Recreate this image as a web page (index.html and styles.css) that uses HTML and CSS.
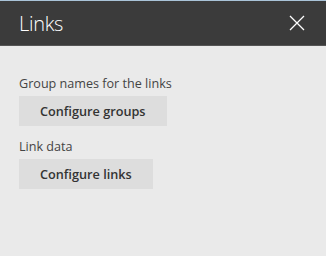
FILE: index.html
```html
<!DOCTYPE html>
<html lang="en">
<head>
    <meta charset="UTF-8">
    <title>Links</title>
    <link rel="stylesheet" href="styles.css">
</head>
<body>
    <div class="panel">
        <div class="panel-header">
            <h1>Links</h1>
            <button class="close-btn" aria-label="Close">
                <svg width="16" height="16" viewBox="0 0 16 16">
                    <path d="M1 1 L15 15 M15 1 L1 15" stroke="#ffffff" stroke-width="1.3" fill="none"/>
                </svg>
            </button>
        </div>

        <div class="panel-body">
            <div class="field">
                <div class="label">Group names for the links</div>
                <button class="action-btn">Configure groups</button>
            </div>
            <div class="field">
                <div class="label">Link data</div>
                <button class="action-btn">Configure links</button>
            </div>
        </div>
    </div>
</body>
</html>
```

FILE: styles.css
```css
:root {
    --header-bg: #3b3b3b;
    --body-bg: #eaeaea;
    --button-bg: #dddddd;
    --text-color: #333333;
    --label-color: #444444;
    --accent-line: #a9c3d8;
}

* {
    box-sizing: border-box;
    margin: 0;
    padding: 0;
}

html, body {
    height: 100%;
}

body {
    font-family: "Open Sans", "Noto Sans", sans-serif;
    background-color: var(--body-bg);
    color: var(--text-color);
}

.panel {
    height: 100%;
    border-top: 1px solid var(--accent-line);
}

.panel-header {
    height: 45px;
    background-color: var(--header-bg);
    border-bottom: 1px solid #555555;
    display: flex;
    align-items: center;
    justify-content: space-between;
    padding: 0 20px 0 19px;
}

.panel-header h1 {
    color: #ffffff;
    font-size: 20px;
    font-weight: 300;
    letter-spacing: -0.3px;
    margin-top: 1px;
}

.close-btn {
    background: none;
    border: none;
    width: 18px;
    height: 18px;
    display: flex;
    align-items: center;
    justify-content: center;
    cursor: pointer;
}

.panel-body {
    padding: 29px 19px;
    display: flex;
    flex-direction: column;
    gap: 12px;
}

.field {
    display: flex;
    flex-direction: column;
    align-items: flex-start;
    gap: 4px;
}

.label {
    font-size: 12.6px;
    color: var(--label-color);
    line-height: 17px;
}

.action-btn {
    background-color: var(--button-bg);
    border: none;
    height: 30px;
    padding: 0 21px;
    font-family: inherit;
    font-size: 12.7px;
    font-weight: 600;
    color: var(--text-color);
    cursor: pointer;
}
```
